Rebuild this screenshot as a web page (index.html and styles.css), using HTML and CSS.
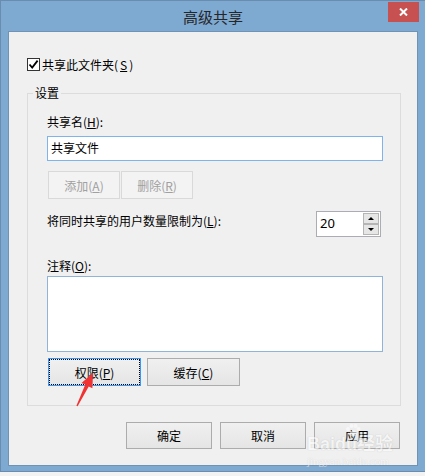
FILE: index.html
```html
<!DOCTYPE html>
<html lang="zh-CN">
<head>
    <meta charset="UTF-8">
    <title>高级共享</title>
    <link rel="stylesheet" href="styles.css">
</head>
<body>
    <div class="window">
        <div class="titlebar">
            <span></span>
            <div class="title">高级共享</div>
            <button class="close">
                <svg width="9" height="8" viewBox="0 0 9 8"><path d="M1 0.5 L8 7.5 M8 0.5 L1 7.5" stroke="#fff" stroke-width="2"/></svg>
            </button>
        </div>

        <div class="client">
            <label class="check-row">
                <span class="checkbox">
                    <svg width="11" height="11" viewBox="0 0 11 11"><path d="M1.5 5.5 L4.2 8.6 L9.6 1.6" fill="none" stroke="#000" stroke-width="1.8"/></svg>
                </span>
                共享此文件夹(<u>S</u>)
            </label>

            <fieldset class="group">
                <legend>设置</legend>
                <div class="group-body">
                    <div class="label first">共享名(<u>H</u>):</div>
                    <div class="textbox">共享文件</div>
                    <div class="btn-row small">
                        <button class="btn disabled">添加(<u>A</u>)</button>
                        <button class="btn disabled">删除(<u>R</u>)</button>
                    </div>
                    <div class="limit-row">
                        <div class="label">将同时共享的用户数量限制为(<u>L</u>):</div>
                        <div class="spinner">
                            <span class="spin-value">20</span>
                            <div class="spin-btns">
                                <span class="spin up"></span>
                                <span class="spin down"></span>
                            </div>
                        </div>
                    </div>
                    <div class="label note">注释(<u>O</u>):</div>
                    <div class="textarea"></div>
                    <div class="btn-row wide">
                        <button class="btn focused">权限(<u>P</u>)</button>
                        <button class="btn">缓存(<u>C</u>)</button>
                    </div>
                </div>
            </fieldset>

            <div class="dialog-buttons">
                <button class="btn">确定</button>
                <button class="btn">取消</button>
                <button class="btn">应用</button>
            </div>
        </div>

        <svg class="arrow" width="30" height="45" viewBox="70 365 30 45">
            <polygon points="93,373 81.5,383 85.3,384.6 76.4,405.8 77.6,406.2 88.7,386.4 92.4,388.2" fill="#F03232"/>
        </svg>

        <div class="watermark">
            <svg class="paw" width="16" height="13" viewBox="0 0 16 13">
                <circle cx="3" cy="5" r="2" fill="#fff"/>
                <circle cx="6.5" cy="2" r="2" fill="#fff"/>
                <circle cx="10.5" cy="2" r="2" fill="#fff"/>
                <circle cx="13.5" cy="5" r="2" fill="#fff"/>
                <ellipse cx="8.5" cy="9.5" rx="3.5" ry="3" fill="#fff"/>
            </svg>
            <div class="wm-logo">Baidu经验</div>
            <div class="wm-url">jingyan.baidu.com</div>
        </div>
    </div>
</body>
</html>
```

FILE: styles.css
```css
body {
    margin: 0;
    background: #f3f3f3;
    font-family: "Noto Sans CJK SC", "Noto Sans", sans-serif;
    font-size: 12px;
    color: #000;
}
.window {
    position: relative;
    width: 425px;
    height: 472px;
    box-sizing: border-box;
    background: #7ea9d1;
    border: 1px solid #6a8cae;
    border-right: none;
}
.titlebar {
    height: 30px;
    display: grid;
    grid-template-columns: 1fr auto 1fr;
    align-items: start;
}
.title {
    margin-top: 8px;
    font-size: 15px;
    line-height: 15px;
    color: #262626;
}
.close {
    justify-self: end;
    width: 31px;
    height: 20px;
    margin: 1px 6px 0 0;
    padding: 0;
    border: none;
    background: #c75050;
    display: flex;
    align-items: center;
    justify-content: center;
}
.client {
    margin-left: 7px;
    width: 410px;
    height: 435px;
    box-sizing: border-box;
    border: 1px solid #6f92b5;
    background: #f0f0f0;
}
.check-row {
    display: flex;
    align-items: center;
    gap: 2px;
    height: 13px;
    margin: 26px 0 0 18px;
    line-height: 15px;
}
.checkbox {
    width: 13px;
    height: 13px;
    box-sizing: border-box;
    border: 1px solid #333;
    background: #fff;
    display: flex;
    align-items: center;
    justify-content: center;
}
.group {
    margin: 15px 16px 0 18px;
    padding: 0;
    border: 1px solid #dcdcdc;
    min-width: 0;
}
.group legend {
    margin-left: 5px;
    padding: 0 2px;
    line-height: 14px;
    font-size: 12px;
}
.group-body {
    padding: 0 17px 19px 19px;
}
.label {
    line-height: 15px;
}
.first {
    margin-top: 14px;
}
.textbox {
    margin-top: 7px;
    height: 25px;
    box-sizing: border-box;
    border: 1px solid #7eb4ea;
    background: #fff;
    padding-left: 3px;
    line-height: 21px;
}
.btn {
    box-sizing: border-box;
    padding: 0;
    border: 1px solid #acacac;
    background: linear-gradient(#f0f0f0, #e5e5e5);
    font: inherit;
    color: #000;
    line-height: 15px;
}
.btn.disabled {
    border-color: #d9d9d9;
    background: #f3f3f3;
    color: #a0a0a0;
}
.btn.focused {
    border-color: #3399ff;
    outline: 1px dotted #000;
    outline-offset: -2px;
}
.btn-row {
    display: flex;
    margin-left: 1px;
}
.btn-row.small {
    margin-top: 10px;
    gap: 1px;
}
.btn-row.small .btn {
    width: 72px;
    height: 28px;
}
.btn-row.wide {
    margin-top: 6px;
    gap: 6px;
}
.btn-row.wide .btn {
    width: 93px;
    height: 28px;
}
.limit-row {
    display: flex;
    justify-content: space-between;
    align-items: flex-start;
    margin-top: 12px;
}
.limit-row .label {
    margin-top: 2px;
}
.spinner {
    width: 65px;
    height: 26px;
    box-sizing: border-box;
    margin-right: 2px;
    border: 1px solid #abadb3;
    background: #fff;
    display: flex;
    justify-content: space-between;
}
.spin-value {
    padding-left: 3px;
    font-family: "Noto Sans", sans-serif;
    font-size: 13px;
    line-height: 23px;
}
.spin-btns {
    display: flex;
    flex-direction: column;
    width: 16px;
    margin: 1px 1px 1px 0;
}
.spin {
    flex: 1;
    box-sizing: border-box;
    border: 1px solid #b5b5b5;
    background: #e6e6e6;
    display: flex;
    align-items: center;
    justify-content: center;
}
.spin::before {
    content: "";
    border-left: 3px solid transparent;
    border-right: 3px solid transparent;
}
.spin.up::before {
    border-bottom: 3px solid #000;
}
.spin.down::before {
    border-top: 3px solid #000;
}
.note {
    margin-top: 21px;
}
.textarea {
    margin-top: 3px;
    height: 76px;
    box-sizing: border-box;
    border: 1px solid #8fb4d8;
    background: #fff;
}
.dialog-buttons {
    display: flex;
    justify-content: flex-end;
    gap: 8px;
    margin: 16px 17px 0 0;
}
.dialog-buttons .btn {
    width: 86px;
    height: 27px;
}
.arrow {
    position: absolute;
    left: 69px;
    top: 364px;
}
.watermark {
    position: absolute;
    left: 306px;
    top: 423px;
    width: 92px;
    opacity: 0.55;
    color: #fff;
}
.paw {
    display: block;
    margin-left: 38px;
}
.wm-logo {
    margin-top: -2px;
    font-family: "Liberation Sans", "Noto Sans CJK SC", sans-serif;
    font-size: 18px;
    font-weight: bold;
    line-height: 18px;
    text-shadow: 0 0 1px #999;
}
.wm-url {
    margin-top: 3px;
    font-family: "Liberation Serif", serif;
    font-size: 11px;
    line-height: 11px;
    text-shadow: 0 0 1px #aaa;
}
```
